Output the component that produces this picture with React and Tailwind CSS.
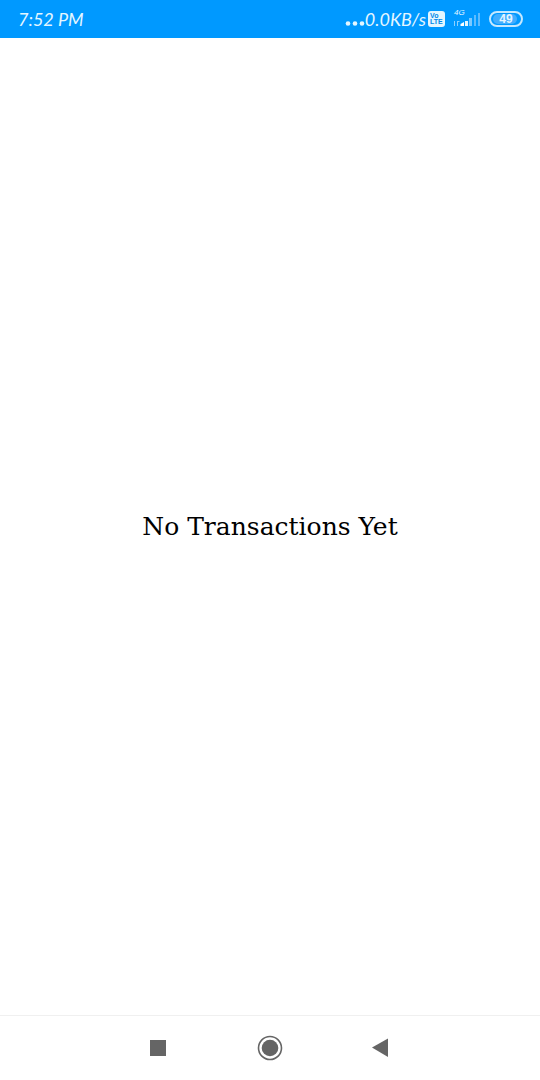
function SignalIcon() {
  return (
    <svg className="h-5 w-7" viewBox="0 0 28 20" aria-hidden="true">
      <g stroke="#8fd0ff" strokeWidth="1" fill="none">
        <path d="M1.5 12v5M4.5 17v-5M4 12.5h2.500" />
      </g>
      <path d="M7.500 17v-2l3.500-2v4z" fill="#fff" />
      <rect x="12" y="12" width="3" height="5" fill="#e4f6ff" />
      <rect x="16" y="9" width="3" height="8" fill="#7cc9ff" />
      <rect x="21" y="6" width="2" height="11" fill="#5dbbff" />
      <rect x="25" y="4" width="2" height="13" fill="#5dbbff" />
    </svg>
  );
}

function StatusBar() {
  return (
    <header className="flex h-[38px] shrink-0 items-center justify-between bg-[#0099ff] pr-[17px] pl-[18px] text-[#e4f6ff]">
      <time className="font-['Lato',sans-serif] text-lg italic">7:52 PM</time>
      <div className="flex items-center">
        <svg className="mt-2 h-[5px] w-5" viewBox="0 0 20 5" fill="currentColor" aria-hidden="true">
          <circle cx="3" cy="2.5" r="2.3" />
          <circle cx="10" cy="2.5" r="2.3" />
          <circle cx="17" cy="2.5" r="2.3" />
        </svg>
        <span className="font-['Lato',sans-serif] text-lg italic">0.0KB/s</span>
        <span className="ml-[2px] flex h-4 w-[17px] flex-col items-start justify-center rounded-[3px] bg-[#e4f6ff] pl-[2px] font-['Liberation_Sans',sans-serif] text-[7px] leading-[6px] font-bold text-[#0088e8]">
          <span>Vo</span>
          <span>LTE</span>
        </span>
        <span className="ml-2 flex h-[38px] w-7 flex-col">
          <span className="mt-[9px] h-2 pl-[1px] font-['Liberation_Sans',sans-serif] text-[8px] leading-[8px] italic">4G</span>
          <span className="-mt-2">
            <SignalIcon />
          </span>
        </span>
        <span className="relative ml-2 flex h-4 w-[34px] items-center justify-center rounded-full border-2 border-[#c4e8ff] font-['Liberation_Sans',sans-serif] text-xs font-bold">
          <span className="absolute inset-y-[1px] left-[2px] w-[24px] rounded-full bg-[#40adff]" />
          <span className="relative">49</span>
        </span>
      </div>
    </header>
  );
}

function NavigationBar() {
  return (
    <nav className="flex h-[65px] shrink-0 items-center justify-center gap-[86px] border-t border-[#f0f0f0] bg-white text-[#656565]">
      <button type="button" aria-label="Recent apps">
        <svg className="h-[26px] w-[26px]" viewBox="0 0 26 26" fill="currentColor">
          <rect x="5" y="5" width="16" height="16" />
        </svg>
      </button>
      <button type="button" aria-label="Home">
        <svg className="h-[26px] w-[26px]" viewBox="0 0 26 26" fill="currentColor">
          <circle cx="13" cy="13" r="11.5" fill="none" stroke="currentColor" strokeWidth="1.6" />
          <circle cx="13" cy="13" r="8.3" />
        </svg>
      </button>
      <button type="button" aria-label="Back">
        <svg className="h-[26px] w-[26px]" viewBox="0 0 26 26" fill="currentColor">
          <path d="M3 12.5L19 3.5v18.500z" />
        </svg>
      </button>
    </nav>
  );
}

export default function App() {
  return (
    <div className="flex min-h-screen flex-col bg-white">
      <StatusBar />
      <main className="flex flex-1 items-center justify-center">
        <p className="font-['DejaVu_Serif',serif] text-[25px] text-black">No Transactions Yet</p>
      </main>
      <NavigationBar />
    </div>
  );
}
